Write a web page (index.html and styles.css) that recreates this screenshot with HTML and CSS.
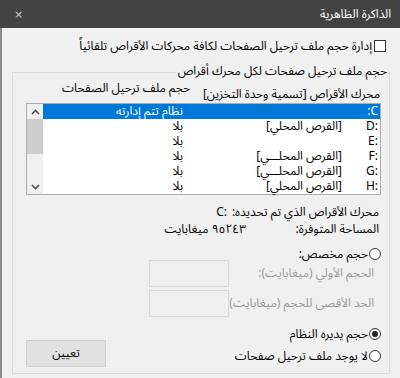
FILE: index.html
```html
<!DOCTYPE html>
<html lang="ar">
<head>
<meta charset="utf-8">
<title>الذاكرة الظاهرية</title>
<link rel="stylesheet" href="styles.css">
</head>
<body>
<div class="window" dir="rtl">
  <div class="titlebar">
    <span class="title">الذاكرة الظاهرية</span>
    <span class="close">×</span>
  </div>
  <div class="content">
    <div class="check-row">
      <span class="checkbox"></span>
      <span>إدارة حجم ملف ترحيل الصفحات لكافة محركات الأقراص تلقائياً</span>
    </div>
    <fieldset class="group">
      <legend>حجم ملف ترحيل صفحات لكل محرك أقراص</legend>
      <div class="headers">
        <span class="h-drive">محرك الأقراص [تسمية وحدة التخزين]</span>
        <span class="h-size">حجم ملف ترحيل الصفحات</span>
      </div>
      <div class="listbox">
        <div class="rows">
          <div class="row selected"><span class="c-drive">C:</span><span class="c-label"></span><span class="c-size">نظام تتم إدارته</span></div>
          <div class="row"><span class="c-drive" dir="ltr">D:</span><span class="c-label">[القرص المحلي]</span><span class="c-size">بلا</span></div>
          <div class="row"><span class="c-drive" dir="ltr">E:</span><span class="c-label"></span><span class="c-size">بلا</span></div>
          <div class="row"><span class="c-drive" dir="ltr">F:</span><span class="c-label">[القرص المحلـــي]</span><span class="c-size">بلا</span></div>
          <div class="row"><span class="c-drive" dir="ltr">G:</span><span class="c-label">[القرص المحلـــي]</span><span class="c-size">بلا</span></div>
          <div class="row"><span class="c-drive" dir="ltr">H:</span><span class="c-label">[القرص المحلي]</span><span class="c-size">بلا</span></div>
        </div>
        <div class="scrollbar">
          <div class="sb-btn">
            <svg width="9" height="6" viewBox="0 0 9 6"><path d="M1 5 L4.5 1.5 L8 5" fill="none" stroke="#505050" stroke-width="1.6"/></svg>
          </div>
          <div class="sb-track"><div class="sb-thumb"></div></div>
          <div class="sb-btn">
            <svg width="9" height="6" viewBox="0 0 9 6"><path d="M1 1 L4.5 4.5 L8 1" fill="none" stroke="#505050" stroke-width="1.6"/></svg>
          </div>
        </div>
      </div>
      <div class="info">
        <div class="info-row">
          <span class="info-label wide">محرك الأقراص الذي تم تحديده:</span>
          <span class="info-value" dir="ltr">C:</span>
        </div>
        <div class="info-row">
          <span class="info-label">المساحة المتوفرة:</span>
          <span class="info-value" dir="ltr">٩٥٢٤٣ ميغابايت</span>
        </div>
      </div>
      <div class="radio-row custom-row">
        <span class="radio"></span>
        <span>حجم مخصص:</span>
      </div>
      <div class="size-row first">
        <span class="size-label">الحجم الأولي (ميغابايت):</span>
        <span class="size-box"></span>
      </div>
      <div class="size-row">
        <span class="size-label">الحد الأقصى للحجم (ميغابايت):</span>
        <span class="size-box"></span>
      </div>
      <div class="bottom">
        <div class="radios">
          <div class="radio-row">
            <span class="radio checked"></span>
            <span>حجم يديره النظام</span>
          </div>
          <div class="radio-row">
            <span class="radio"></span>
            <span>لا يوجد ملف ترحيل صفحات</span>
          </div>
        </div>
        <span class="button">تعيين</span>
      </div>
    </fieldset>
  </div>
</div>
</body>
</html>
```

FILE: styles.css
```css
* { box-sizing: border-box; }
html, body {
  margin: 0;
  padding: 0;
  width: 400px;
  height: 378px;
  overflow: hidden;
  background: #f0f0f0;
}
body {
  font-family: "Segoe UI", "Noto Sans Arabic", "DejaVu Sans", sans-serif;
  font-size: 12px;
  color: #000;
  white-space: nowrap;
}
.window {
  width: 400px;
  height: 378px;
  display: flex;
  flex-direction: column;
}
.titlebar {
  height: 28px;
  flex: none;
  background: #434343;
  color: #fff;
  display: flex;
  align-items: center;
  justify-content: space-between;
  padding: 0 9px 0 14px;
}
.title { font-size: 12px; }
.close {
  color: #cfcfcf;
  font-family: "DejaVu Sans", sans-serif;
  font-size: 11px;
}
.content {
  flex: 1;
  border-left: 2px solid #8a8a8a;
  padding-top: 10px;
}
.check-row {
  display: flex;
  align-items: center;
  gap: 2px;
  height: 16px;
  padding-right: 14px;
}
.checkbox {
  width: 12px;
  height: 12px;
  border: 1px solid #333;
  background: #fff;
  flex: none;
}
.group {
  margin: 10px 10px 0 10px;
  border: 1px solid #dcdcdc;
  padding: 0 8px 0 13px;
  height: 310px;
  min-width: 0;
}
.group legend {
  padding: 0 2px;
  margin-right: -8px;
  line-height: 16px;
}
.headers {
  height: 23px;
  display: flex;
  align-items: flex-end;
  justify-content: space-between;
  padding-right: 1px;
  padding-left: 36px;
  line-height: 16px;
}
.h-size { margin-bottom: 6px; }
.listbox {
  height: 92px;
  border: 1px solid #adadad;
  background: #fff;
  display: flex;
}
.rows { flex: 1; }
.row {
  height: 15px;
  line-height: 15px;
  display: grid;
  grid-template-columns: 36px 159px 1fr;
  padding-right: 2px;
}
.c-drive { text-align: right; }
.row.selected {
  background: #0078d7;
  color: #fff;
}
.scrollbar {
  width: 16px;
  flex: none;
  background: #f0f0f0;
  display: flex;
  flex-direction: column;
}
.sb-btn {
  height: 15px;
  display: flex;
  align-items: center;
  justify-content: center;
}
.sb-track { flex: 1; }
.sb-thumb {
  height: 35px;
  background: #cdcdcd;
}
.info {
  padding-right: 2px;
  margin-top: 9px;
  line-height: 17px;
}
.info-row { display: flex; }
.info-label { width: 133px; }
.info-label.wide { width: 152px; }
.radio-row {
  display: flex;
  align-items: center;
  gap: 1px;
  height: 16px;
}
.custom-row { margin-top: 8px; }
.radio {
  width: 12px;
  height: 12px;
  border: 1px solid #333;
  border-radius: 50%;
  background: #fff;
  flex: none;
  display: flex;
  align-items: center;
  justify-content: center;
}
.radio.checked::after {
  content: "";
  width: 6px;
  height: 6px;
  border-radius: 50%;
  background: #222;
}
.size-row {
  display: grid;
  grid-template-columns: 145px 80px;
  align-items: center;
  padding-right: 7px;
  height: 27px;
  margin-top: 3px;
  color: #999;
}
.size-row.first { margin-top: -2px; }
.size-box {
  height: 27px;
  border: 1px solid #dadada;
  background: #f0f0f0;
}
.bottom {
  display: flex;
  justify-content: space-between;
  align-items: flex-start;
  margin-top: 9px;
}
.radios {
  display: flex;
  flex-direction: column;
  gap: 6px;
}
.button {
  margin-top: 14px;
  width: 80px;
  height: 27px;
  background: #e1e1e1;
  border: 1px solid #d0d0d0;
  display: flex;
  align-items: center;
  justify-content: center;
}
```
